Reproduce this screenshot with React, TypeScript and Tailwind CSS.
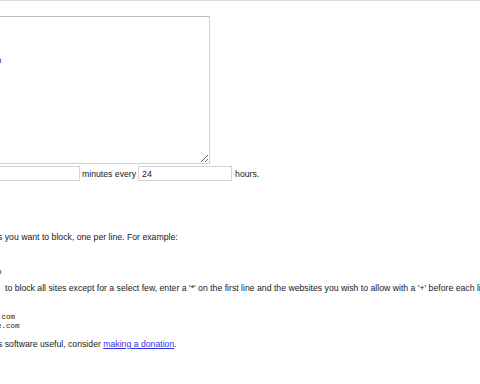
import React from "react";

const sans = "font-['Liberation_Sans',Arial,sans-serif]";
const mono = "font-['Liberation_Mono','Courier_New',monospace]";

const blockedSites = [
  "facebook.com",
  "twitter.com",
  "youtube.com",
  "reddit.com",
  "www.sina.com.cn",
].join("\n");

function NumberField({ value }: { value: string }) {
  return (
    <input
      type="text"
      defaultValue={value}
      className={`h-[15px] w-[94px] border border-[#d4d4d4] bg-white px-[3px] text-[8.7px] text-[#1a1a1a] outline-none ${sans}`}
    />
  );
}

export default function App() {
  return (
    <div className={`h-[384px] w-[480px] overflow-hidden bg-white text-[8.7px] leading-[10px] text-[#1a1a1a] ${sans}`}>
      <div className="h-px bg-[#dcdcdc]" />

      <textarea
        defaultValue={blockedSites}
        className={`-ml-[79px] mt-[15px] block h-[148px] w-[289px] border border-[#d2d2d2] border-t-[#c0c0c0] bg-white px-[2px] pt-[3px] text-[8.6px] leading-[9.3px] text-[#1a1a1a] outline-none ${mono}`}
      />

      <div className="mt-[2px] flex h-[15px] items-center whitespace-nowrap">
        <div className="-ml-[14px]">
          <NumberField value="" />
        </div>
        <span className="ml-[2px]">minutes every</span>
        <div className="ml-[2px]">
          <NumberField value="24" />
        </div>
        <span className="ml-[3px]">hours.</span>
      </div>

      <p className="-ml-[2px] mt-[51px] whitespace-nowrap">
        s you want to block, one per line. For example:
      </p>

      <pre className={`-ml-[48px] mt-[7.5px] text-[7.5px] leading-[9px] ${mono}`}>
        {"reddit.com\ndigg.com\nwww.sina.cn"}
      </pre>

      <p className="ml-[5px] mt-[6px] whitespace-nowrap">
        to block all sites except for a select few, enter a '*' on the first line and the websites you wish
        to allow with a '+' before each line.
      </p>

      <pre className={`-ml-[48px] mt-[11px] text-[7.5px] leading-[9px] ${mono}`}>
        {"*\n+www.gmail.com\n+www.google.com"}
      </pre>

      <p className="-ml-[2px] mt-[8px] whitespace-nowrap">
        s software useful, consider{" "}
        <a href="#" className="text-[#3434e6] underline">
          making a donation
        </a>
        .
      </p>
    </div>
  );
}
